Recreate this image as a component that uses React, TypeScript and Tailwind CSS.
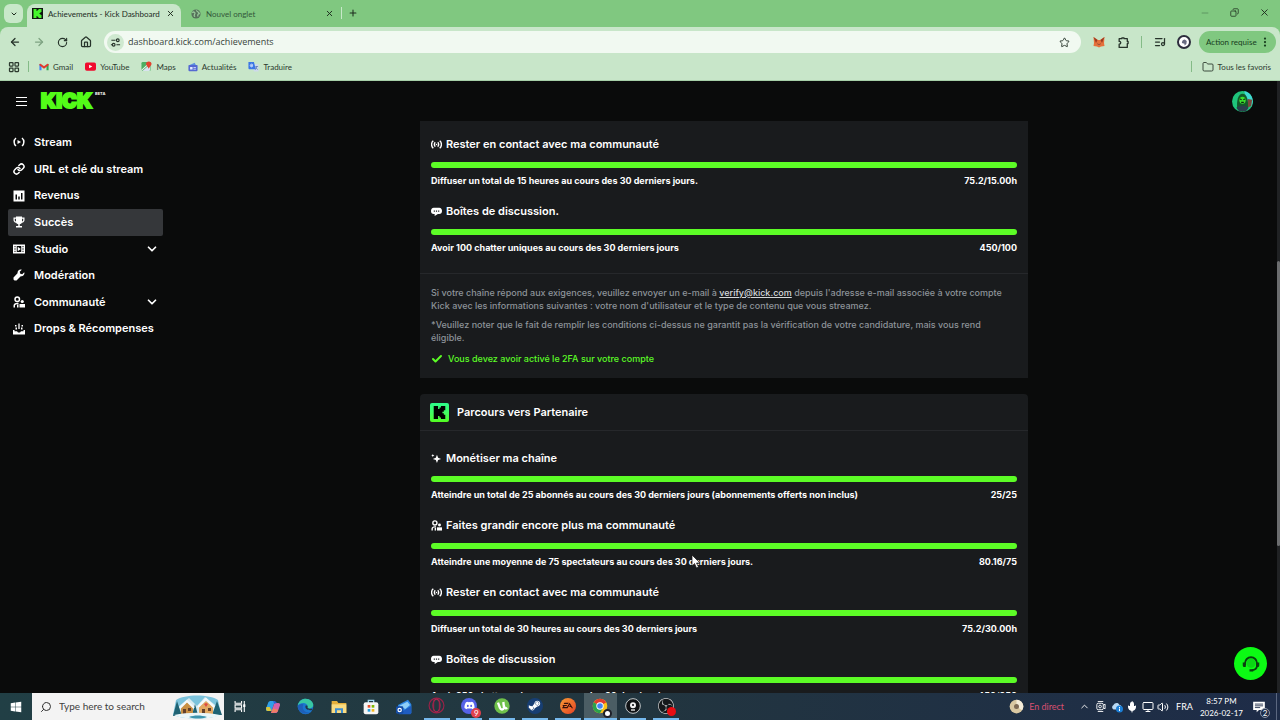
import type { ReactNode } from 'react';
import {
  ArrowLeft,
  ArrowRight,
  Check,
  ChevronDown,
  ChevronUp,
  Copy,
  Folder,
  House,
  LayoutGrid,
  Link,
  ListMusic,
  Mic,
  Minus,
  Monitor,
  MoreVertical,
  Plus,
  RotateCw,
  Search,
  Star,
  Volume2,
  X,
} from 'lucide-react';
import { FaDiscord, FaSteamSymbol, FaWindows } from 'react-icons/fa';
import { SiEa, SiKick, SiObsstudio } from 'react-icons/si';

const uiFont = "font-['Lato','Open_Sans',sans-serif]";
const appFont = "font-['Inter','Liberation_Sans',sans-serif]";

/* ---------- Icons ---------- */

function Svg({ size = 12, box = 24, children }: { size?: number; box?: number; children: ReactNode }) {
  return (
    <svg width={size} height={size} viewBox={`0 0 ${box} ${box}`} fill="none" aria-hidden="true" className="shrink-0">
      {children}
    </svg>
  );
}

const StreamIcon = () => (
  <Svg>
    <path d="M6 4C1 8 1 16 6 20M18 4c5 4 5 12 0 16" stroke="currentColor" strokeWidth="3" />
    <path d="M9 8l7 4-7 4z" fill="currentColor" />
  </Svg>
);

const RevenueIcon = () => (
  <Svg>
    <path
      fillRule="evenodd"
      fill="currentColor"
      d="M1 1h22v22H1zM5 9v10h3V9zM10.500 13v6h3v-6zM16 6v13h3V6z"
    />
  </Svg>
);

const TrophyIcon = () => (
  <Svg>
    <path
      fill="currentColor"
      d="M6 1h12v2h5v5c0 3-2 5-5 5.500-1 1.500-2.500 2.500-4.500 3V20H18v3H6v-3h4.500v-3.500c-2-.5-3.500-1.500-4.500-3C3 13 1 11 1 8V3h5zM6 5.500H3.500V8c0 1.500 1 2.500 2.500 3zM18 5.500V11c1.500-.5 2.500-1.500 2.500-3V5.500z"
    />
  </Svg>
);

const StudioIcon = () => (
  <Svg>
    <path
      fillRule="evenodd"
      fill="currentColor"
      d="M0 3h24v18H0zM3 6v2.500h2V6zM3 10.700v2.600h2v-2.600zM3 15.500V18h2v-2.500zM7.500 6v12h9V6zM19 6v2.500h2V6zM19 10.700v2.600h2v-2.600zM19 15.500V18h2v-2.500z"
    />
    <path d="M9.500 7.500l6 4.500-6 4.500z" fill="currentColor" />
  </Svg>
);

const WrenchIcon = () => (
  <Svg>
    <path
      fill="currentColor"
      d="M22.500 6.500l-4 4-4-1-1-4 4-4c-4-1.500-9 1.500-8.500 7L1 17v4l2 2h4l8.500-8.500c5 .5 8.500-4 7-8z"
    />
  </Svg>
);

const CommunityIcon = ({ size = 12 }: { size?: number }) => (
  <Svg size={size}>
    <circle cx="8.500" cy="6.500" r="4.500" stroke="currentColor" strokeWidth="3" />
    <path d="M1 23v-4c0-3 3-5.500 8-5.500h2v3H9c-3 0-5 1-5 3V23z" fill="currentColor" />
    <path d="M8 17h3v6H8z" fill="currentColor" />
    <circle cx="18.500" cy="11" r="3.200" fill="currentColor" />
    <path d="M13 23v-7h11v7z" fill="currentColor" />
  </Svg>
);

const DropsIcon = () => (
  <Svg>
    <path d="M10.700 1h2.600v11h-2.600zM4 4h3v3H4zM5 9h3v4H5zM17 4h3v3h-3zM16 9h3v4h-3z" fill="currentColor" />
    <path d="M0 14h3v2.500h5L10 19h4l2-2.500h5V14h3v9H0z" fill="currentColor" />
  </Svg>
);

const BroadcastIcon = () => (
  <Svg size={11}>
    <path
      d="M5 4C0 8 0 16 5 20M19 4c5 4 5 12 0 16M9.500 7.500c-3 2-3 7 0 9M14.500 7.500c3 2 3 7 0 9"
      stroke="currentColor"
      strokeWidth="3"
    />
    <circle cx="12" cy="12" r="1.800" fill="currentColor" />
  </Svg>
);

const ChatIcon = () => (
  <Svg size={11}>
    <path
      fillRule="evenodd"
      fill="currentColor"
      d="M6 4h12c4 0 6 3 6 7s-2 6.500-6 6.500h-3L8 22v-4.500H6c-4 0-6-2.500-6-6.500s2-7 6-7zM6 10v2.500h2.500V10zM10.700 10v2.500h2.600V10zM15.500 10v2.500H18V10z"
    />
  </Svg>
);

const SparkleIcon = () => (
  <Svg size={11}>
    <path
      fill="currentColor"
      d="M13 4l2.500 6.500L22 13l-6.500 2.500L13 22l-2.500-6.500L4 13l6.500-2.500zM4 2l1 2.500L7.500 5.500 5 6.500 4 9 3 6.500.5 5.500 3 4.500z"
    />
  </Svg>
);

const KickBadge = ({ size }: { size: number }) => (
  <span className="flex shrink-0 items-center justify-center rounded-[2px] bg-linear-to-b from-[#2bfb8a] to-[#53fc18] p-[3px] text-black">
    <SiKick size={size} />
  </span>
);

const ChromeLogo = ({ size = 15 }: { size?: number }) => (
  <Svg size={size}>
    <circle cx="12" cy="12" r="11" fill="#fbc116" />
    <path d="M12 12L2.500 6.500A11 11 0 0 1 21.500 6.500z" fill="#e33b2e" />
    <path d="M12 12L2.500 6.500A11 11 0 0 0 12 23l4.500-8.500z" fill="#2ba24c" />
    <circle cx="12" cy="12" r="5.500" fill="#fff" />
    <circle cx="12" cy="12" r="4.200" fill="#4285f4" />
  </Svg>
);

/* ---------- Browser chrome ---------- */

function TabStrip() {
  return (
    <div className="flex h-[27px] items-end bg-[#80c880] text-[#1d2b1e]">
      <button aria-label="Rechercher dans les onglets" className="mb-1 ml-1 flex h-[19px] w-[19px] items-center justify-center rounded-md bg-[#c8e8c9]">
        <ChevronDown size={8} strokeWidth={3} />
      </button>
      <div className="ml-1 flex h-[23px] w-[154px] items-center rounded-t-lg bg-[#c8e6c9] pb-1 pl-[5px] pr-[6px]">
        <span className="flex h-[11px] w-[11px] shrink-0 items-center justify-center bg-[#101510] text-[#45f52c]">
          <SiKick size={9} />
        </span>
        <span className="ml-[5px] flex-1 whitespace-nowrap text-[8px]">Achievements - Kick Dashboard</span>
        <button aria-label="Fermer l'onglet"><X size={9} strokeWidth={2.5} /></button>
      </div>
      <div className="ml-[10px] flex h-[23px] w-[143px] items-center pb-1">
        <Svg size={10}>
          <circle cx="12" cy="12" r="11" fill="#55705a" />
          <path d="M3 9c4-4 8 0 6 3s-2 5 1 6M13 3c0 4 6 3 7 8-3 0-5 3-3 7" stroke="#98c99a" strokeWidth="3" />
        </Svg>
        <span className="ml-[5px] flex-1 text-[8px] text-[#33573a]">Nouvel onglet</span>
        <button aria-label="Fermer l'onglet"><X size={9} strokeWidth={2.5} /></button>
      </div>
      <span className="mb-2 ml-[7px] h-3 w-px bg-[#c8e8c9]" />
      <button aria-label="Nouvel onglet" className="mb-[9px] ml-[6px]"><Plus size={10} strokeWidth={2.5} /></button>
      <div className="mb-[9px] ml-auto mr-[10px] flex items-center gap-5">
        <button aria-label="Réduire" className="text-[#4c7a50]"><Minus size={10} strokeWidth={1.5} /></button>
        <button aria-label="Restaurer"><Copy size={9} strokeWidth={2} className="-scale-x-100" /></button>
        <button aria-label="Fermer"><X size={11} strokeWidth={2} /></button>
      </div>
    </div>
  );
}

function Toolbar() {
  return (
    <div className="flex h-[30px] items-center pl-[9px] pr-1 text-[#26332a]">
      <div className="flex items-center gap-3">
        <button aria-label="Précédent"><ArrowLeft size={12} strokeWidth={2.5} /></button>
        <button aria-label="Suivant" className="text-[#7ea382]"><ArrowRight size={12} strokeWidth={2.5} /></button>
        <button aria-label="Actualiser"><RotateCw size={11} strokeWidth={2.5} /></button>
        <button aria-label="Accueil"><House size={12} strokeWidth={2.5} /></button>
      </div>
      <div className="ml-3 flex h-[22px] flex-1 items-center rounded-full bg-[#f1f9f1] pl-[3px] pr-[11px]">
        <span className="flex h-[17px] w-[17px] items-center justify-center rounded-full bg-[#cfe9d0]">
          <Svg size={11}>
            <path d="M3 7h9M14 17h8M2 17h3" stroke="currentColor" strokeWidth="2.400" />
            <circle cx="17" cy="7" r="3" stroke="currentColor" strokeWidth="2.400" />
            <circle cx="8" cy="17" r="3" stroke="currentColor" strokeWidth="2.400" />
          </Svg>
        </span>
        <input
          aria-label="Adresse"
          defaultValue="dashboard.kick.com/achievements"
          className="ml-1 flex-1 bg-transparent font-['Open_Sans',sans-serif] text-[9px] text-[#38443b] outline-none"
        />
        <button aria-label="Ajouter aux favoris"><Star size={11} strokeWidth={2} /></button>
      </div>
      <button aria-label="MetaMask" className="ml-3">
        <Svg>
          <path d="M1 2l9 6h4l9-6-1 12 1 6-7 1-4 2-4-2-7-1 1-6z" fill="#e5703a" />
          <path d="M1 2l8 6-3 6zM23 2l-8 6 3 6z" fill="#9c3a22" />
          <path d="M8 15l3 1v2zM16 15l-3 1v2z" fill="#2d2a3d" />
        </Svg>
      </button>
      <button aria-label="Extensions" className="ml-3">
        <Svg size={13}>
          <path d="M4 5h5V3.500h4V5h6v5h1.500v4H19v7H4v-6c4 0 4-5 0-5z" stroke="currentColor" strokeWidth="2.400" strokeLinejoin="round" />
        </Svg>
      </button>
      <span className="ml-[11px] h-3 w-px bg-[#84bb87]" />
      <button aria-label="Médias" className="ml-3"><ListMusic size={12} strokeWidth={2.5} /></button>
      <button aria-label="Profil" className="ml-[11px] flex h-[14px] w-[14px] items-center justify-center rounded-full border-2 border-[#2d2d3d] bg-white">
        <Svg size={9}>
          <path d="M5 13c0-6 4-9 8-9l5 4-1 8-5 4v-5z" fill="#676a80" />
        </Svg>
      </button>
      <button className="ml-2 flex h-[22px] w-[77px] items-center justify-between rounded-full bg-[#80c880] pl-[7px] pr-[5px] text-[8px] text-[#173d1d]">
        Action requise
        <MoreVertical size={12} strokeWidth={2.5} />
      </button>
    </div>
  );
}

const bookmarks = [
  {
    name: 'Gmail',
    icon: (
      <Svg size={10}>
        <path d="M1 20V5l5 4v11z" fill="#4285f4" />
        <path d="M23 20V5l-5 4v11z" fill="#34a853" />
        <path d="M1 5l3-1 8 6 8-6 3 1v3l-11 8L1 8z" fill="#e2382c" />
      </Svg>
    ),
  },
  {
    name: 'YouTube',
    icon: (
      <Svg size={11}>
        <rect x="0" y="3" width="24" height="18" rx="4" fill="#f00b2e" />
        <path d="M9 8l7 4-7 4z" fill="#fff" />
      </Svg>
    ),
  },
  {
    name: 'Maps',
    icon: (
      <Svg size={11}>
        <rect x="1" y="2" width="20" height="20" rx="3" fill="#4fae63" />
        <path d="M3 22L20 7v12a3 3 0 0 1-3 3z" fill="#d9e3ef" />
        <path d="M1 22V19L18 3l2 2z" fill="#eef3f0" />
        <path d="M17 1c4 0 6 3 6 5 0 4-4 6-6 11-2-5-6-7-6-11 0-2 2-5 6-5z" fill="#e5402f" />
      </Svg>
    ),
  },
  {
    name: 'Actualités',
    icon: (
      <Svg size={10}>
        <path d="M4 7l12-5 3 6z" fill="#5d91e0" />
        <rect x="1" y="7" width="22" height="15" rx="2" fill="#5569d2" />
        <path d="M5 12h6v6H5zM13 12h6v2h-6zM13 16h6v2h-6z" fill="#e6ecff" />
      </Svg>
    ),
  },
  {
    name: 'Traduire',
    icon: (
      <Svg size={11}>
        <path d="M8 7h14a1 1 0 0 1 1 1v14a1 1 0 0 1-1 1h-9z" fill="#cdd9ec" />
        <path d="M1 2h12l4 16H3a2 2 0 0 1-2-2z" fill="#3c77e6" />
        <path d="M11 9H8v2h2c-1 3-5 2-5-1s3-4 5-2" stroke="#fff" strokeWidth="1.600" />
        <path d="M16 12h6M19 11v2l-3 6M17 14l4 5" stroke="#5a79b5" strokeWidth="1.600" />
      </Svg>
    ),
  },
];

function BookmarksBar() {
  return (
    <div className="flex h-6 items-center border-b border-[#a6cfa8] pb-1 pl-2 pr-[9px] text-[8px] text-[#2c3a2f]">
      <button aria-label="Applications"><LayoutGrid size={12} strokeWidth={2.5} /></button>
      <span className="ml-2 h-[11px] w-px bg-[#84bb87]" />
      <nav className="ml-[10px] flex items-center gap-3">
        {bookmarks.map((item) => (
          <a key={item.name} href="#" className="flex items-center gap-1">
            {item.icon}
            {item.name}
          </a>
        ))}
      </nav>
      <span className="ml-auto h-[11px] w-px bg-[#84bb87]" />
      <button className="ml-[10px] flex items-center gap-1">
        <Folder size={12} strokeWidth={1.8} />
        Tous les favoris
      </button>
    </div>
  );
}

/* ---------- Dashboard ---------- */

function DashboardHeader() {
  return (
    <header className="flex h-10 shrink-0 items-center pl-4 pr-6">
      <button aria-label="Menu" className="flex w-[11px] flex-col gap-[3px]">
        <span className="h-px bg-white" />
        <span className="h-px bg-white" />
        <span className="h-px bg-white" />
      </button>
      <a href="#" aria-label="Kick" className="ml-[13px] flex">
        <svg width="55" height="20" viewBox="0 0 55 20" className="overflow-visible">
          <text
            x="1"
            y="17"
            fontSize="20"
            fontWeight="900"
            fill="#53fc18"
            stroke="#53fc18"
            strokeWidth="2"
            fontFamily="Inter, sans-serif"
          >
            KICK
          </text>
        </svg>
        <span className="text-[4px] font-bold leading-[5px] text-white">BETA</span>
      </a>
      <button aria-label="Mon compte" className="ml-auto">
        <Svg size={21}>
          <circle cx="12" cy="12" r="12" fill="#1fc47b" />
          <path d="M14 0a12 12 0 0 1 8 18l-5-6z" fill="#3fd9d2" />
          <path d="M18 9l5 1-1 7-5 2z" fill="#7a4a3c" />
          <path d="M6 20c-1-9 1-17 6-17s7 7 6 17l-6 4z" fill="#135a2a" />
          <ellipse cx="12" cy="10.500" rx="3.600" ry="4" fill="#3be02c" />
          <path d="M9 9l2 1M15 9l-2 1M10.500 13h3" stroke="#0b2410" strokeWidth="1.200" />
          <path d="M5 19c4-3 10-3 14 0l-3 4H8z" fill="#2b3f4c" />
        </Svg>
      </button>
    </header>
  );
}

const navItems = [
  { name: 'Stream', icon: <StreamIcon /> },
  { name: 'URL et clé du stream', icon: <Link size={12} strokeWidth={3} /> },
  { name: 'Revenus', icon: <RevenueIcon /> },
  { name: 'Succès', icon: <TrophyIcon />, active: true },
  { name: 'Studio', icon: <StudioIcon />, expandable: true },
  { name: 'Modération', icon: <WrenchIcon /> },
  { name: 'Communauté', icon: <CommunityIcon />, expandable: true },
  { name: 'Drops & Récompenses', icon: <DropsIcon /> },
];

function Sidebar() {
  return (
    <aside className="w-[171px] shrink-0 px-2 pt-2">
      <nav className="flex h-[213px] flex-col">
        {navItems.map((item) => (
          <a
            key={item.name}
            href="#"
            className={`flex flex-1 items-center rounded-[2px] pl-[5px] pr-1 text-[11px] font-semibold text-white ${item.active ? 'bg-[#35373a]' : ''}`}
          >
            {item.icon}
            <span className="ml-[9px] flex-1">{item.name}</span>
            {item.expandable && <ChevronDown size={14} strokeWidth={3} />}
          </a>
        ))}
      </nav>
    </aside>
  );
}

type GoalProps = { icon: ReactNode; title: string; text: string; value: string };

function Goal({ icon, title, text, value }: GoalProps) {
  return (
    <section>
      <h3 className="flex h-4 items-center gap-1 text-[11px] font-semibold">
        {icon}
        {title}
      </h3>
      <div role="progressbar" aria-label={title} aria-valuenow={100} className="mt-[10px] h-[6px] rounded-full bg-[#5cfc26]" />
      <div className="mt-[5px] flex h-4 items-center justify-between text-[9px] font-bold">
        <span>{text}</span>
        <span>{value}</span>
      </div>
    </section>
  );
}

const affiliateGoals: GoalProps[] = [
  {
    icon: <BroadcastIcon />,
    title: 'Rester en contact avec ma communauté',
    text: 'Diffuser un total de 15 heures au cours des 30 derniers jours.',
    value: '75.2/15.00h',
  },
  {
    icon: <ChatIcon />,
    title: 'Boîtes de discussion.',
    text: 'Avoir 100 chatter uniques au cours des 30 derniers jours',
    value: '450/100',
  },
];

const partnerGoals: GoalProps[] = [
  {
    icon: <SparkleIcon />,
    title: 'Monétiser ma chaîne',
    text: 'Atteindre un total de 25 abonnés au cours des 30 derniers jours (abonnements offerts non inclus)',
    value: '25/25',
  },
  {
    icon: <CommunityIcon size={11} />,
    title: 'Faites grandir encore plus ma communauté',
    text: 'Atteindre une moyenne de 75 spectateurs au cours des 30 derniers jours.',
    value: '80.16/75',
  },
  {
    icon: <BroadcastIcon />,
    title: 'Rester en contact avec ma communauté',
    text: 'Diffuser un total de 30 heures au cours des 30 derniers jours',
    value: '75.2/30.00h',
  },
  {
    icon: <ChatIcon />,
    title: 'Boîtes de discussion',
    text: 'Avoir 250 chatter uniques au cours des 30 derniers jours',
    value: '450/250',
  },
];

function Achievements() {
  return (
    <main className="min-w-0 flex-1 overflow-hidden text-white">
      <div className="mx-auto flex max-w-[608px] flex-col gap-4">
        <article className="bg-[#191b1d]">
          <div className="flex flex-col gap-[14px] border-b border-[#26282b] px-[11px] pb-[17px] pt-[15px]">
            {affiliateGoals.map((goal) => (
              <Goal key={goal.title} {...goal} />
            ))}
          </div>
          <div className="px-[11px] pb-[13px] pt-3 text-[9px] font-medium leading-[13px] text-[#8d9399]">
            <p>
              Si votre chaîne répond aux exigences, veuillez envoyer un e-mail à{' '}
              <a href="mailto:verify@kick.com" className="text-[#d5d8db] underline">verify@kick.com</a> depuis l'adresse
              e-mail associée à votre compte
              <br />
              Kick avec les informations suivantes : votre nom d'utilisateur et le type de contenu que vous streamez.
            </p>
            <p className="mt-[6px]">
              *Veuillez noter que le fait de remplir les conditions ci-dessus ne garantit pas la vérification de votre
              candidature, mais vous rend
              <br />
              éligible.
            </p>
            <p className="mt-2 flex items-center gap-[5px] text-[#5cfc26]">
              <Check size={12} strokeWidth={4} />
              Vous devez avoir activé le 2FA sur votre compte
            </p>
          </div>
        </article>

        <article className="rounded-t bg-[#191b1d]">
          <h2 className="flex h-[37px] items-center gap-2 border-b border-[#26282b] px-[10px] text-[11px] font-semibold">
            <KickBadge size={13} />
            Parcours vers Partenaire
          </h2>
          <div className="flex flex-col gap-[14px] px-[11px] pb-4 pt-[19px]">
            {partnerGoals.map((goal) => (
              <Goal key={goal.title} {...goal} />
            ))}
          </div>
        </article>
      </div>
    </main>
  );
}

/* ---------- Windows taskbar ---------- */

const taskbarApps = [
  {
    name: 'Affichage des tâches',
    icon: (
      <Svg size={13}>
        <path d="M2 2v4h12V2M2 22v-4h12v4M2 9h12v6H2zM19 2v20" stroke="#fff" strokeWidth="2" />
        <path d="M17 8h4v5h-4z" fill="#fff" />
      </Svg>
    ),
  },
  {
    name: 'Copilot',
    icon: (
      <Svg size={16}>
        <path d="M8 3h7l-5 15H4c-3 0-3-3-2-5l3-8c1-1 2-2 3-2z" fill="#2f9fe8" />
        <path d="M2 12l5 0 3 6H4c-2 0-3-2-2-6z" fill="#d9c63b" />
        <path d="M14 6h6c3 0 3 3 2 5l-3 8c-1 1-2 2-3 2H9z" fill="#d560a8" />
        <path d="M15 3l3 3-4 1-2-4z" fill="#2763d6" />
        <path d="M12 14l8 2-2 4-9 1z" fill="#ef7f63" />
      </Svg>
    ),
  },
  {
    name: 'Edge',
    icon: (
      <Svg size={17}>
        <circle cx="12" cy="12" r="11" fill="#1a76cf" />
        <path d="M1 11C2 4 7 1 12 1c7 0 11 5 11 9 0 3-3 5-6 5-2 0-3-1-2-3 0-3-3-5-6-5-4 0-7 2-8 4z" fill="#38c7a4" />
        <path d="M9 9c-3 6 2 13 10 11-7 5-18 0-18-8 1-3 5-4 8-3z" fill="#1e5fb8" />
        <path d="M15 12c-1 2 1 3 3 3h4l-1 2c-5 1-10-1-9-6 2-1 3 0 3 1z" fill="#20384a" />
      </Svg>
    ),
  },
  {
    name: 'Explorateur',
    icon: (
      <Svg size={16}>
        <path d="M1 3h8l2 3h12v15H1z" fill="#e6b03b" />
        <path d="M1 8h22v13H1z" fill="#f9dc82" />
        <path d="M6 21v-7h12v7h-3v-4H9v4z" fill="#3f8ed0" />
      </Svg>
    ),
  },
  {
    name: 'Microsoft Store',
    icon: (
      <Svg size={16}>
        <path d="M8 6V2h8v4" stroke="#9ed5ee" strokeWidth="2" />
        <rect x="1" y="5" width="22" height="18" rx="3" fill="#f5f5f5" />
        <path d="M7 9h4v4H7z" fill="#e8502d" />
        <path d="M13 9h4v4h-4z" fill="#7fba00" />
        <path d="M7 15h4v4H7z" fill="#259fe0" />
        <path d="M13 15h4v4h-4z" fill="#f3b81b" />
      </Svg>
    ),
  },
  {
    name: 'Outlook',
    icon: (
      <Svg size={16}>
        <path d="M3 9L18 1l5 7v13H3z" fill="#2c87e3" />
        <path d="M5 10l12-6 4 5-7 6z" fill="#8fd0f8" />
        <path d="M4 22l19-12v11a2 2 0 0 1-2 2H4z" fill="#1e5cc0" />
        <rect x="0" y="11" width="11" height="11" rx="2" fill="#144ca5" />
        <circle cx="5.500" cy="16.500" r="2.500" stroke="#fff" strokeWidth="1.800" />
      </Svg>
    ),
  },
  {
    name: 'Opera GX',
    running: true,
    icon: (
      <Svg size={17}>
        <circle cx="12" cy="12" r="10.500" stroke="#9c2248" strokeWidth="1.600" />
        <ellipse cx="12" cy="12" rx="5" ry="9" stroke="#b32650" strokeWidth="1.600" />
        <path d="M8 5v14M16 5v14" stroke="#9c2248" strokeWidth="1.500" />
      </Svg>
    ),
  },
  {
    name: 'Discord',
    running: true,
    icon: (
      <span className="relative flex h-4 w-4 items-center justify-center rounded-full bg-[#5662e8] text-white">
        <FaDiscord size={11} />
        <span className="absolute -bottom-1 -right-1 flex h-[10px] w-[10px] items-center justify-center rounded-full bg-[#e0404c] text-[8px] leading-none">9</span>
      </span>
    ),
  },
  {
    name: 'uTorrent',
    running: true,
    icon: (
      <Svg size={16}>
        <circle cx="12" cy="12" r="11.500" fill="#6fc04a" />
        <path d="M6 7l3 8c1 3 5 3 6 0l-1-9M15 12c1 4 3 4 5 3" stroke="#fff" strokeWidth="3.500" />
      </Svg>
    ),
  },
  {
    name: 'Steam',
    running: true,
    icon: (
      <span className="flex h-4 w-4 items-center justify-center rounded-full bg-[#173e73] text-white">
        <FaSteamSymbol size={13} />
      </span>
    ),
  },
  {
    name: 'EA',
    running: true,
    icon: (
      <span className="flex h-4 w-4 items-center justify-center rounded-full bg-linear-to-br from-[#f89a35] to-[#e33b25] text-[#35100a]">
        <SiEa size={11} />
      </span>
    ),
  },
  {
    name: 'Chrome',
    running: true,
    active: true,
    icon: (
      <span className="relative">
        <ChromeLogo size={16} />
        <span className="absolute -bottom-1 -right-1 h-[9px] w-[9px] rounded-full border-2 border-[#1f2029] bg-white" />
      </span>
    ),
  },
  {
    name: 'Streamlabs',
    running: true,
    icon: (
      <Svg size={16}>
        <circle cx="12" cy="12" r="11" fill="#101214" stroke="#cfd4d6" strokeWidth="1.400" />
        <circle cx="12" cy="11" r="4.500" fill="#f2f2f2" />
        <circle cx="12" cy="10.500" r="1.600" fill="#101214" />
        <path d="M9 17h6v2H9z" fill="#f2f2f2" />
      </Svg>
    ),
  },
  {
    name: 'OBS Studio',
    running: true,
    icon: (
      <span className="relative flex h-4 w-4 items-center justify-center rounded-full bg-[#15181b] text-[#c9cdd0]">
        <SiObsstudio size={16} />
        <span className="absolute -bottom-[2px] -right-[2px] h-[9px] w-[9px] rounded-full bg-[#e80d12]" />
      </span>
    ),
  },
];

function WinterScene() {
  return (
    <svg width="50" height="24" viewBox="0 0 50 24" aria-hidden="true">
      <path d="M4 5C12-1 38-1 46 5l3 14c-8 6-36 6-48 1z" fill="#7cc3dc" />
      <path d="M6 12L17 3l8 8 8-9 14 11v8H3z" fill="#d8ebf0" />
      <path d="M1 21l4-15 5 15zM40 20l5-14 5 14zM20 20l3-11 3 11z" fill="#1f6273" />
      <path d="M9 12l6-5 6 5v8H9z" fill="#c99045" />
      <path d="M8 13l7-7 7 7" stroke="#f5fafc" strokeWidth="2" fill="none" />
      <path d="M27 12l7-6 7 6v8H27z" fill="#e2a862" />
      <path d="M26 12l8-8 8 8" stroke="#f5fafc" strokeWidth="2" fill="none" />
      <path d="M11 14h3v5h-3zM16 13h3v3h-3zM30 14h3v5h-3zM36 13h3v3h-3z" fill="#64402b" />
      <path d="M32 9l2-1 2 1-2 3z" fill="#dd4b42" />
      <path d="M2 20c14-3 32-3 46 0-9 5-37 5-46 0z" fill="#eaf5f8" />
      <path d="M17 22c5-2 12-2 18 0-5 2-13 2-18 0z" fill="#3c94ae" />
    </svg>
  );
}

function Taskbar() {
  return (
    <footer className="flex h-[27px] shrink-0 items-stretch bg-linear-to-r from-[#213f45] via-[#22353f] to-[#1e2c48] text-white">
      <button aria-label="Démarrer" className="flex w-8 items-center justify-center"><FaWindows size={12} /></button>
      <label className="flex w-48 items-center bg-[#f3f3f3] pl-2 pr-[2px] text-[#303030]">
        <Search size={12} strokeWidth={2} className="-scale-x-100" />
        <input
          aria-label="Type here to search"
          placeholder="Type here to search"
          className="ml-[7px] w-0 flex-1 bg-transparent text-[10px] outline-none placeholder:text-[#404040]"
        />
        <WinterScene />
      </label>
      <div className="flex w-[458px]">
        {taskbarApps.map((app) => (
          <button
            key={app.name}
            aria-label={app.name}
            className={`flex flex-1 flex-col items-center justify-between ${app.active ? 'bg-[#4b5d64]' : ''}`}
          >
            <span className="flex flex-1 items-center justify-center">{app.icon}</span>
            {app.running && <span className={`h-[2px] bg-[#76b9ed] ${app.active ? 'w-full' : 'w-[26px]'}`} />}
          </button>
        ))}
      </div>
      <div className="ml-auto flex items-center pr-[3px] text-[9px]">
        <Svg size={15}>
          <circle cx="12" cy="12" r="11" fill="#d9c8a2" />
          <path d="M12 1a11 11 0 0 1 9 17l-9-6z" fill="#f4ecd9" />
          <circle cx="12" cy="12" r="4" fill="#7d6a55" />
        </Svg>
        <span className="ml-[5px] text-[#d94f70]">En direct</span>
        <button aria-label="Icônes cachées" className="ml-[15px]"><ChevronUp size={11} strokeWidth={2} /></button>
        <span className="ml-[5px]">
          <Svg size={11}>
            <path d="M6 1h12M6 23h12" stroke="#fff" strokeWidth="2" />
            <rect x="4" y="5" width="14" height="14" rx="3" stroke="#fff" strokeWidth="2" />
            <circle cx="11" cy="12" r="3" stroke="#fff" strokeWidth="2" />
            <path d="M18 9l4-2v10l-4-2" stroke="#fff" strokeWidth="2" />
          </Svg>
        </span>
        <span className="ml-[5px]">
          <Svg size={12}>
            <path d="M5 17a5 5 0 0 1 0-9c2-5 10-6 12 0 4 0 6 5 3 9z" fill="#b9d8f2" />
            <circle cx="17" cy="16" r="7" fill="#1c7fd6" />
            <path d="M16 12h2v2h-2zM16 15h2v5h-2z" fill="#fff" />
          </Svg>
        </span>
        <Mic size={12} strokeWidth={2} fill="currentColor" className="ml-[3px]" />
        <Monitor size={12} strokeWidth={2} className="ml-1" />
        <Volume2 size={12} strokeWidth={2} className="ml-[3px]" />
        <span className="ml-[7px]">FRA</span>
        <div className="ml-[7px] text-center text-[8px] leading-[12px]">
          <div>8:57 PM</div>
          <div>2026-02-17</div>
        </div>
        <button aria-label="Notifications" className="relative ml-[9px]">
          <Svg size={14}>
            <path d="M2 3h20v14H12l-4 4v-4H2z" fill="#fff" />
            <path d="M5 7h14M5 10h14M5 13h9" stroke="#1e2c48" strokeWidth="1.500" />
          </Svg>
          <span className="absolute -bottom-1 -right-1 flex h-[10px] w-[10px] items-center justify-center rounded-full border border-[#8b95a5] bg-[#1e2c48] text-[8px] leading-none">2</span>
        </button>
        <span className="ml-[10px] h-[27px] w-px bg-[#5b6780]" />
      </div>
    </footer>
  );
}

export default function App() {
  return (
    <div className={`flex h-screen flex-col overflow-hidden bg-[#0a0b0b] ${uiFont}`}>
      <TabStrip />
      <div className="bg-[#80c880]">
        <div className="rounded-t-lg bg-[#c8e6c9]">
          <Toolbar />
          <BookmarksBar />
        </div>
      </div>

      <div className={`relative flex min-h-0 flex-1 ${appFont}`}>
        <div className="flex min-w-0 flex-1 flex-col">
          <DashboardHeader />
          <div className="flex min-h-0 flex-1">
            <Sidebar />
            <Achievements />
          </div>
        </div>
        <div className="w-[3px] shrink-0 bg-[#202224] pt-[180px]">
          <div className="h-[285px] rounded-full bg-[#6b6d6f]" />
        </div>
        <button
          aria-label="Assistance"
          className="absolute bottom-[13px] right-[13px] flex h-[33px] w-[33px] items-center justify-center rounded-full bg-[#0cfa14] text-[#0b3d10]"
        >
          <Svg size={18}>
            <circle cx="12" cy="11" r="6" fill="#0bd614" />
            <path d="M4 14v-3a8 8 0 0 1 16 0v3c0 4-3 6-7 6.500" stroke="currentColor" strokeWidth="2.400" />
            <path d="M1 10h4v6H3a2 2 0 0 1-2-2zM19 10h4v4a2 2 0 0 1-2 2h-2zM10 19h5v3h-5z" fill="currentColor" />
          </Svg>
        </button>
      </div>

      <Taskbar />

      {/* Mouse pointer */}
      <svg className="absolute left-[691px] top-[555px]" width="9" height="14" viewBox="0 0 9 14" aria-hidden="true">
        <path d="M1 0v11l2.500-2.500L5.500 13l2-1-2-4H9z" fill="#fff" stroke="#111" strokeWidth=".7" />
      </svg>
    </div>
  );
}
